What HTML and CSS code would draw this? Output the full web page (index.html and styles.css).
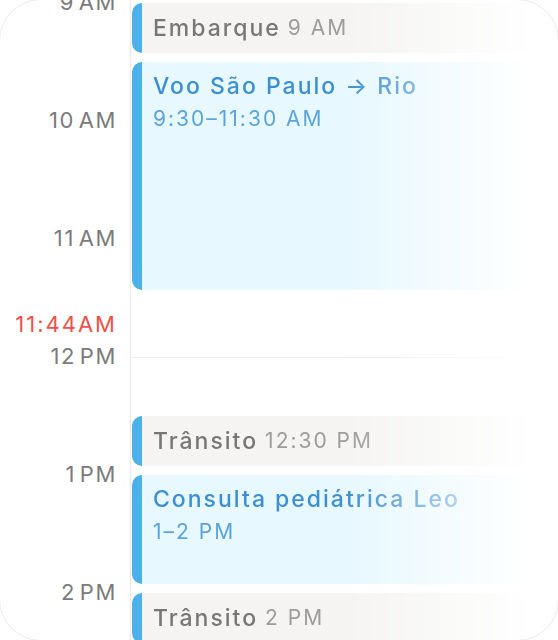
FILE: index.html
```html
<!DOCTYPE html>
<html lang="pt">
<head>
  <meta charset="UTF-8">
  <meta name="viewport" content="width=device-width, initial-scale=1.0">
  <title>Calendário</title>
  <link rel="stylesheet" href="styles.css">
</head>
<body>
  <div id="day">
    <!-- coluna das horas -->
    <div class="hours">
      <div class="hour first"><span class="label">9 AM</span></div>
      <div class="hour"><span class="label">10 AM</span></div>
      <div class="hour">
        <span class="label">11 AM</span>
        <span class="label now">11:44AM</span>
      </div>
      <div class="hour"><span class="label">12 PM</span></div>
      <div class="hour"><span class="label">1 PM</span></div>
      <div class="hour"><span class="label">2 PM</span></div>
    </div>

    <!-- eventos -->
    <div class="events">
      <div class="event travel">
        <span class="title">Embarque</span> <span class="time">9 AM</span>
      </div>
      <div class="event main voo">
        <div class="title">Voo São Paulo → Rio</div>
        <div class="time">9:30–11:30 AM</div>
      </div>
      <div class="noon-line"></div>
      <div class="event travel transit">
        <span class="title">Trânsito</span> <span class="time">12:30 PM</span>
      </div>
      <div class="event main consulta">
        <div class="title">Consulta pediátrica Leo</div>
        <div class="time">1–2 PM</div>
      </div>
      <div class="event travel last">
        <span class="title">Trânsito</span> <span class="time">2 PM</span>
      </div>
    </div>
  </div>
</body>
</html>
```

FILE: styles.css
```css
* {
  margin: 0;
  padding: 0;
  box-sizing: border-box;
}

body {
  background: #fff;
  font-family: Inter, "Noto Sans", sans-serif;
  width: 558px;
  height: 640px;
  overflow: hidden;
}

#day {
  position: relative;
  display: grid;
  grid-template-columns: 130px 1fr;
  height: 640px;
  overflow: hidden;
}

/* moldura arredondada do cartão */
#day::after {
  content: "";
  position: absolute;
  top: -1px;
  left: -1px;
  right: -1px;
  bottom: -1px;
  border: 1px solid #e9e9e9;
  border-radius: 42px;
  pointer-events: none;
}

.hours {
  padding-right: 13px;
  text-align: right;
}

.hour {
  height: 118px;
}

.hour.first {
  margin-top: -10px;
}

.label {
  display: block;
  font-size: 22px;
  line-height: 24px;
  color: #7b7b7b;
  word-spacing: -4px;
  letter-spacing: 1.6px;
}

.label.now {
  color: #f0504a;
  margin-top: 62px;
  letter-spacing: 2px;
}

.events {
  border-left: 1px solid #ece8e8;
  padding-top: 3px;
  -webkit-mask-image: linear-gradient(to right, #000 0, #000 215px, transparent 405px);
  mask-image: linear-gradient(to right, #000 0, #000 215px, transparent 405px);
}

.event {
  margin-left: 1px;
  margin-right: 6px;
  border-left: 10px solid #4cb0ea;
  border-radius: 10px;
  padding: 0 11px;
}

.event .title {
  font-size: 23px;
  font-weight: 500;
  line-height: 26px;
  letter-spacing: 2px;
}

.event .time {
  font-size: 21px;
  line-height: 26px;
  letter-spacing: 2px;
}

.travel {
  background: #f5f4f2;
  height: 50px;
  display: flex;
  align-items: center;
  gap: 7px;
}

.travel .title {
  color: #777;
}

.travel .time {
  color: #9c9c9c;
}

.main {
  background: #e7f8fe;
  margin-top: 9px;
  padding-top: 11px;
}

.main .title {
  color: #3b8fd2;
  margin-bottom: 7px;
}

.main .time {
  color: #5aa4dd;
}

.voo {
  height: 228px;
}

.consulta {
  height: 109px;
}

.noon-line {
  height: 1px;
  margin-top: 67px;
  background: #efecec;
}

.transit {
  margin-top: 58px;
}

.last {
  margin-top: 9px;
}
```
